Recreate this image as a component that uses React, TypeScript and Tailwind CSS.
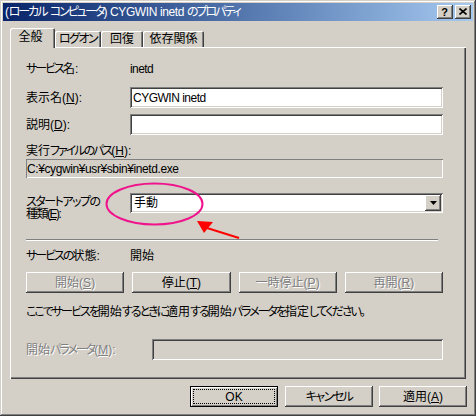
import React from "react";

const raised =
  "shadow-[inset_-1px_-1px_0_#404040,inset_1px_1px_0_#ffffff,inset_-2px_-2px_0_#808080]";
const sunken =
  "shadow-[inset_1px_1px_0_#808080,inset_-1px_-1px_0_#ffffff,inset_2px_2px_0_#404040,inset_-2px_-2px_0_#d4d0c8]";
const disabledText = "text-[#808080] [text-shadow:1px_1px_0_#ffffff]";

function K({ children }: { children: React.ReactNode }) {
  return <span className="tracking-[-2px]">{children}</span>;
}

function Ks({ children }: { children: React.ReactNode }) {
  return <span className="tracking-[-1.5px]">{children}</span>;
}

function L({ children }: { children: React.ReactNode }) {
  return <span className="tracking-[-0.4px]">{children}</span>;
}

function PushButton({
  children,
  disabled,
}: {
  children: React.ReactNode;
  disabled?: boolean;
}) {
  return (
    <div
      className={`flex h-[21px] items-center justify-center whitespace-nowrap bg-[#d4d0c8] ${raised} ${
        disabled ? disabledText : "text-black"
      }`}
    >
      <span>{children}</span>
    </div>
  );
}

function Tab({
  children,
  w,
  active,
}: {
  children: React.ReactNode;
  w: string;
  active?: boolean;
}) {
  if (active) {
    return (
      <div
        className={`relative z-10 -mb-px flex h-[20px] ${w} justify-center whitespace-nowrap rounded-t-[2px] bg-[#d4d0c8] pr-[4px] pt-[1px] leading-[16px] shadow-[inset_1px_1px_0_#ffffff,inset_-1px_0_0_#404040,inset_-2px_0_0_#808080]`}
      >
        {children}
      </div>
    );
  }
  return (
    <div
      className={`flex h-[16px] ${w} justify-center whitespace-nowrap rounded-t-[2px] leading-[16px] shadow-[inset_1px_1px_0_#ffffff,inset_-1px_0_0_#404040,inset_-2px_0_0_#808080]`}
    >
      {children}
    </div>
  );
}

export default function App() {
  return (
    <div className="relative h-[416px] w-[476px] overflow-hidden bg-[#d4d0c8] p-[3px] font-['Liberation_Sans','Noto_Sans_CJK_JP',sans-serif] text-[12px] text-black [font-feature-settings:'palt'] shadow-[inset_-1px_-1px_0_#404040,inset_1px_1px_0_#d4d0c8,inset_-2px_-2px_0_#808080,inset_2px_2px_0_#ffffff]">
      {/* Title bar */}
      <div className="flex h-[18px] items-center bg-linear-to-r from-[#0a246a] to-[#a6caf0] pl-[2px] pr-[2px]">
        <span className="flex-1 whitespace-nowrap leading-[18px] text-white">
          <L>(</L>
          <K>ローカル</K> <K>コンピュータ</K>
          <L>) CYGWIN inetd </L>
          <K>のプロパティ</K>
        </span>
        <div className="flex gap-[2px]">
          <div
            className={`flex h-[14px] w-[16px] items-center justify-center bg-[#d4d0c8] pr-[1px] text-[11px] font-bold leading-[14px] ${raised}`}
          >
            ?
          </div>
          <div
            className={`flex h-[14px] w-[16px] items-center justify-center bg-[#d4d0c8] pb-[1px] pr-[1px] ${raised}`}
          >
            <svg width="8" height="7" viewBox="0 0 8 7">
              <path
                d="M0.5 0.5 L7.5 6.5 M7.5 0.5 L0.5 6.5"
                stroke="#000"
                strokeWidth="1.6"
                fill="none"
              />
            </svg>
          </div>
        </div>
      </div>

      {/* Tabs */}
      <div className="ml-[7px] mt-[7px] flex h-[19px] items-end">
        <Tab w="w-[45px]" active>
          全般
        </Tab>
        <Tab w="w-[46px]">
          <Ks>ログオン</Ks>
        </Tab>
        <Tab w="w-[42px]">回復</Tab>
        <Tab w="w-[61px]">依存関係</Tab>
      </div>

      {/* Panel */}
      <div className="ml-[7px] flex h-[332px] w-[456px] flex-col pl-[16px] pr-[23px] pt-[14px] shadow-[inset_1px_1px_0_#ffffff,inset_-1px_-1px_0_#404040,inset_-2px_-2px_0_#808080]">
        <div className="flex h-[16px] items-center">
          <div className="w-[104px]">
            <K>サービス</K>名:
          </div>
          <div className="tracking-[-0.6px]">inetd</div>
        </div>

        <div className="mt-[10px] flex items-center">
          <div className="w-[104px]">
            表示名(<u>N</u>):
          </div>
          <div
            className={`flex h-[21px] flex-1 items-center bg-white pl-[3px] tracking-[-0.5px] ${sunken}`}
          >
            CYGWIN inetd
          </div>
        </div>

        <div className="mt-[6px] flex items-center">
          <div className="w-[104px]">
            説明(<u>D</u>):
          </div>
          <div className={`h-[21px] flex-1 bg-white ${sunken}`} />
        </div>

        <div className="mt-[9px] h-[15px] leading-[15px]">
          実行<K>ファイルのパス</K>(<u>H</u>):
        </div>
        <div className="flex h-[19px] items-center pl-[1px] tracking-[-0.4px] shadow-[inset_1px_1px_0_#808080,inset_-1px_-1px_0_#ffffff]">
          C:¥cygwin¥usr¥sbin¥inetd.exe
        </div>

        <div className="mt-[15px] flex items-start">
          <div className="relative w-[104px] pt-[3px]">
            <div className="whitespace-pre-line leading-[12px] tracking-[-1.5px]">
              {"スタートアップの\n種類(E):"}
            </div>
            <span className="absolute left-[23px] top-[26px] h-px w-[7px] bg-black" />
          </div>
          <div className={`flex h-[20px] flex-1 items-center bg-white p-[2px] ${sunken}`}>
            <div className="flex-1 pl-[2px]">手動</div>
            <div
              className={`flex h-[16px] w-[16px] items-center justify-center bg-[#d4d0c8] ${raised}`}
            >
              <svg width="7" height="4" viewBox="0 0 7 4">
                <polygon points="0,0 7,0 3.5,4" fill="#000" />
              </svg>
            </div>
          </div>
        </div>

        <div className="mr-[5px] mt-[19px] h-[2px] border-b border-t border-b-white border-t-[#808080]" />

        <div className="mt-[7px] flex h-[16px] items-center">
          <div className="w-[104px]">
            <K>サービスの</K>状態:
          </div>
          <div>開始</div>
        </div>

        <div className="mt-[8px] grid grid-cols-4 gap-[8px]">
          <PushButton disabled>
            開始(<u>S</u>)
          </PushButton>
          <PushButton>
            停止(<u>T</u>)
          </PushButton>
          <PushButton disabled>
            一時停止(<u>P</u>)
          </PushButton>
          <PushButton disabled>
            再開(<u>R</u>)
          </PushButton>
        </div>

        <div className="mt-[11px] h-[16px] whitespace-nowrap leading-[16px]">
          <K>ここでサービスを</K>開始<K>するときに</K>適用<K>する</K>開始
          <K>パラメータを</K>指定<K>してください。</K>
        </div>

        <div className="mt-[19px] flex items-center">
          <div className={`w-[126px] ${disabledText}`}>
            開始<K>パラメータ</K>(<u>M</u>):
          </div>
          <div className={`h-[21px] flex-1 bg-[#d4d0c8] ${sunken}`} />
        </div>
      </div>

      {/* Bottom buttons */}
      <div className="mt-[7px] flex justify-end pr-[6px]">
        <div className="flex h-[21px] w-[88px] border border-black bg-[#d4d0c8] shadow-[inset_1px_1px_0_#ffffff,inset_-1px_-1px_0_#808080]">
          <div className="m-[2px] flex flex-1 items-center justify-center border border-dotted border-black">
            OK
          </div>
        </div>
        <div className="ml-[7px] w-[88px]">
          <PushButton>
            <Ks>キャンセル</Ks>
          </PushButton>
        </div>
        <div className="ml-[6px] w-[88px]">
          <PushButton>
            適用(<u>A</u>)
          </PushButton>
        </div>
      </div>

      {/* Annotation overlay */}
      <svg
        className="pointer-events-none absolute left-0 top-0"
        width="476"
        height="416"
        viewBox="0 0 476 416"
      >
        <ellipse
          cx="154.5"
          cy="204"
          rx="48"
          ry="20.5"
          stroke="#f0148c"
          strokeWidth="2"
          fill="none"
        />
        <line x1="239" y1="238" x2="207" y2="228" stroke="#ff0000" strokeWidth="2" />
        <polygon points="197,221 213,222 204,233" fill="#ff0000" />
      </svg>
    </div>
  );
}
